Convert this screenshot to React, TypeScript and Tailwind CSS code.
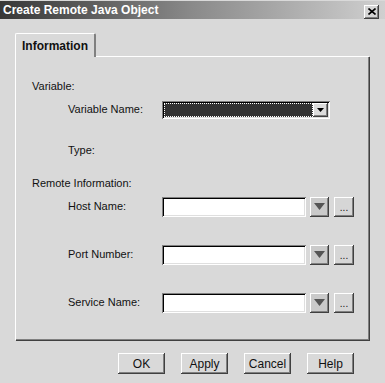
import React from "react";

const raised =
  "shadow-[inset_-1px_-1px_0_#404040,inset_1px_1px_0_#ffffff,inset_-2px_-2px_0_#808080]";
const sunken =
  "shadow-[inset_1px_1px_0_#808080,inset_-1px_-1px_0_#ffffff,inset_2px_2px_0_#000000,inset_-2px_-2px_0_#dfdfdf]";

function Row({ label, children }: { label: string; children?: React.ReactNode }) {
  return (
    <div className="flex items-center pl-[52px]">
      <span className="w-[94px] shrink-0">{label}</span>
      {children}
    </div>
  );
}

function LookupField() {
  return (
    <div className="flex items-center">
      <div className={`h-[20px] w-[144px] bg-white ${sunken}`} />
      <div
        className={`ml-[4px] flex h-[20px] w-[19px] items-center justify-center bg-[#cacaca] ${raised}`}
      >
        <svg width="11" height="7" viewBox="0 0 11 7">
          <path d="M0 0 H11 L5.5 7 Z" fill="#555555" />
        </svg>
      </div>
      <div
        className={`ml-[5px] flex h-[20px] w-[20px] items-end justify-center bg-[#d6d6d6] pb-[4px] text-[10px] leading-none ${raised}`}
      >
        ...
      </div>
    </div>
  );
}

const buttons = ["OK", "Apply", "Cancel", "Help"];

export default function App() {
  return (
    <div className="h-[383px] w-[385px] overflow-hidden bg-[#d9d9d9] pt-px font-['Liberation_Sans',Arial,sans-serif] text-[11px] text-[#111111]">
      <div className="flex h-[18px] items-center justify-between bg-gradient-to-r from-[#383838] via-[#8a8a8a] to-[#d0d0d0] pl-[3px] pr-[6px]">
        <span className="text-[12px] font-bold text-white">Create Remote Java Object</span>
        <div className={`mt-[3px] flex h-[14px] w-[15px] items-center justify-center bg-[#d6d6d6] ${raised}`}>
          <svg width="8" height="7" viewBox="0 0 8 7">
            <path d="M0.5 0.5 L7.5 6.5 M7.5 0.5 L0.5 6.5" stroke="#000" strokeWidth="1.6" />
          </svg>
        </div>
      </div>

      <div className="ml-[15px] mt-[14px] w-[354px]">
        <div className="relative z-10 -mb-px flex h-[24px] w-[81px] items-center rounded-t-[2px] border-l border-t border-r-2 border-l-white border-t-white border-r-[#808080] bg-[#d9d9d9] pl-[6px] text-[12px] font-bold">
          Information
        </div>
        <div className="h-[284px] border-l border-t border-l-white border-t-white shadow-[inset_-1px_-1px_0_#808080,1px_1px_0_#404040]">
          <div className="pl-[16px] pt-[21px]">Variable:</div>

          <div className="mt-[6px]">
            <Row label="Variable Name:">
              <div className={`flex h-[18px] w-[168px] items-center bg-white p-[2px] ${sunken}`}>
                <div className="h-full flex-1 border border-dotted border-white bg-[#333333]" />
                <div className={`flex h-full w-[15px] items-center justify-center bg-[#dcdcdc] ${raised}`}>
                  <svg width="7" height="4" viewBox="0 0 7 4">
                    <path d="M0 0 H7 L3.5 4 Z" fill="#000" />
                  </svg>
                </div>
              </div>
            </Row>
          </div>

          <div className="mt-[23px] h-[14px]">
            <Row label="Type:" />
          </div>

          <div className="mt-[19px] h-[14px] pl-[16px]">Remote Information:</div>

          <div className="mt-[8px]">
            <Row label="Host Name:">
              <LookupField />
            </Row>
          </div>
          <div className="mt-[28px]">
            <Row label="Port Number:">
              <LookupField />
            </Row>
          </div>
          <div className="mt-[28px]">
            <Row label="Service Name:">
              <LookupField />
            </Row>
          </div>
        </div>
      </div>

      <div className="mr-[31px] mt-[13px] flex justify-end gap-[16px]">
        {buttons.map((b) => (
          <div
            key={b}
            className={`flex h-[21px] w-[47px] items-center justify-center bg-[#d9d9d9] text-[12px] ${raised}`}
          >
            {b}
          </div>
        ))}
      </div>
    </div>
  );
}
